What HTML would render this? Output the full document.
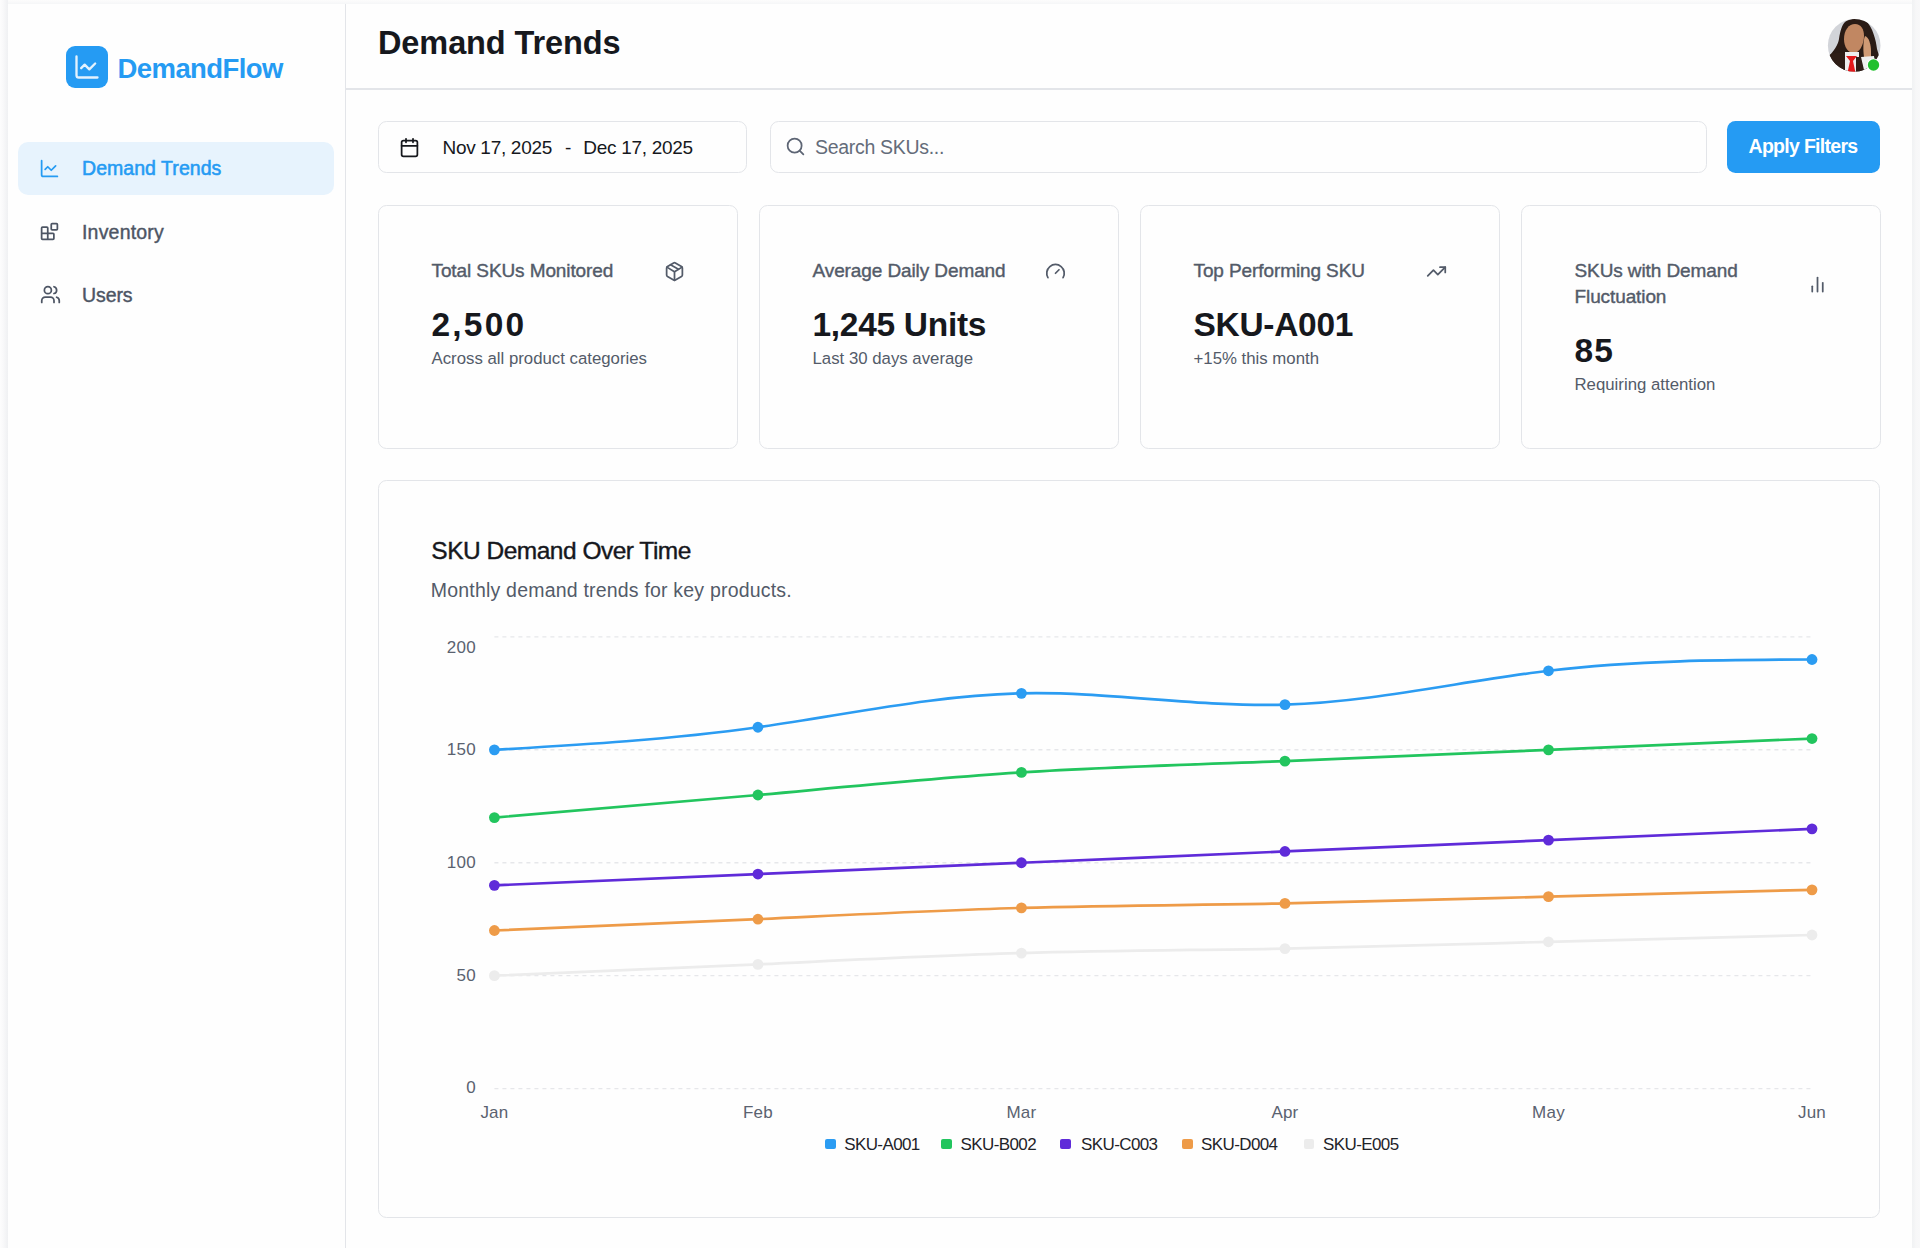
<!DOCTYPE html>
<html><head><meta charset="utf-8"><title>DemandFlow - Demand Trends</title>
<style>
html,body{margin:0;padding:0;}
body{width:1920px;height:1248px;overflow:hidden;background:#fcfcfd;font-family:"Liberation Sans", sans-serif;position:relative;}
.frame{position:absolute;left:8px;top:4px;width:1904px;height:1260px;background:#fefefe;}
.fl{position:absolute;left:0;top:0;width:8px;height:1248px;background:linear-gradient(to right,#fdfdfd 0,#f9f9fa 3px,#f1f2f4 7px,#f0f1f3 8px);}
.fr{position:absolute;left:1912px;top:0;width:8px;height:1248px;background:linear-gradient(to right,#f1f2f4 0,#f3f4f5 2px,#f7f7f8 4px,#f8f8f9 8px);}
.ft{position:absolute;left:0;top:0;width:1920px;height:4px;background:linear-gradient(to bottom,#fcfcfc 0,#f9f9fa 2px,#f5f6f7 4px);}
.side{position:absolute;left:344.5px;top:4px;width:1.5px;height:1244px;background:#e3e5e9;}
.hdr{position:absolute;left:346px;top:88px;width:1566px;height:1.6px;background:#e3e5e9;}
.t{position:absolute;white-space:nowrap;line-height:1;}
.box{position:absolute;}
.card{border:1.6px solid #e3e5e9;border-radius:8.5px;box-sizing:border-box;background:#fefefe;}
.ic{position:absolute;overflow:visible;}
</style></head><body>
<div class="ft"></div><div class="fl"></div><div class="fr"></div><div class="frame"></div>
<div class="side"></div>
<div class="hdr"></div>
<div class="box" style="left:66px;top:46px;width:42px;height:42px;background:#259bf3;border-radius:9px"></div>
<svg class="ic" style="left:73px;top:53px;" width="28" height="28" viewBox="0 0 24 24" fill="none" stroke="#e3f2fe" stroke-width="2" stroke-linecap="round" stroke-linejoin="round"><path d="M3 3v16a2 2 0 0 0 2 2h16"/><path d="m19 9-5 5-4-4-3 3"/></svg>
<div class="t" style="left:117.60px;top:54.92px;font-size:27.5px;font-weight:700;color:#259bf3;letter-spacing:-0.6px;">DemandFlow</div>
<div class="box" style="left:18px;top:142px;width:316px;height:53px;background:#e7f3fd;border-radius:10px"></div>
<svg class="ic" style="left:39.2px;top:157.5px;" width="21" height="21" viewBox="0 0 24 24" fill="none" stroke="#259bf3" stroke-width="2" stroke-linecap="round" stroke-linejoin="round"><path d="M3 3v16a2 2 0 0 0 2 2h16"/><path d="m19 9-5 5-4-4-3 3"/></svg>
<div class="t" style="left:82.00px;top:159.49px;font-size:19.5px;font-weight:400;color:#259bf3;letter-spacing:0.05px;-webkit-text-stroke:0.55px #259bf3;">Demand Trends</div>
<svg class="ic" style="left:39.2px;top:220.7px;" width="21" height="21" viewBox="0 0 24 24" fill="none" stroke="#4d5564" stroke-width="2" stroke-linecap="round" stroke-linejoin="round"><rect width="7" height="7" x="14" y="3" rx="1"/><path d="M10 21V8a1 1 0 0 0-1-1H4a1 1 0 0 0-1 1v12a1 1 0 0 0 1 1h12a1 1 0 0 0 1-1v-5a1 1 0 0 0-1-1H3"/></svg>
<div class="t" style="left:82.00px;top:222.69px;font-size:19.5px;font-weight:400;color:#4d5564;letter-spacing:0.2px;-webkit-text-stroke:0.4px #4d5564;">Inventory</div>
<svg class="ic" style="left:39.5px;top:284.3px;" width="21" height="21" viewBox="0 0 24 24" fill="none" stroke="#4d5564" stroke-width="2" stroke-linecap="round" stroke-linejoin="round"><path d="M16 21v-2a4 4 0 0 0-4-4H6a4 4 0 0 0-4 4v2"/><circle cx="9" cy="7" r="4"/><path d="M22 21v-2a4 4 0 0 0-3-3.87"/><path d="M16 3.13a4 4 0 0 1 0 7.75"/></svg>
<div class="t" style="left:82.00px;top:286.19px;font-size:19.5px;font-weight:400;color:#4d5564;letter-spacing:-0.1px;-webkit-text-stroke:0.4px #4d5564;">Users</div>
<div class="t" style="left:378.00px;top:26.99px;font-size:32.5px;font-weight:700;color:#16181d;letter-spacing:-0.1px;">Demand Trends</div>
<div class="box" style="left:378px;top:121px;width:369px;height:52px;border:1.6px solid #e3e5e9;border-radius:8.5px;box-sizing:border-box"></div>
<svg class="ic" style="left:399px;top:137px;" width="21" height="21" viewBox="0 0 24 24" fill="none" stroke="#16181d" stroke-width="2" stroke-linecap="round" stroke-linejoin="round"><path d="M8 2v4"/><path d="M16 2v4"/><rect width="18" height="18" x="3" y="4" rx="2"/><path d="M3 10h18"/></svg>
<div class="t" style="left:442.50px;top:137.62px;font-size:19px;font-weight:400;color:#16181d;letter-spacing:-0.3px;">Nov 17, 2025</div>
<div class="t" style="left:565.00px;top:137.62px;font-size:19px;font-weight:400;color:#16181d;letter-spacing:0px;">-</div>
<div class="t" style="left:583.30px;top:137.62px;font-size:19px;font-weight:400;color:#16181d;letter-spacing:-0.3px;">Dec 17, 2025</div>
<div class="box" style="left:770px;top:121px;width:937px;height:52px;border:1.6px solid #e3e5e9;border-radius:8.5px;box-sizing:border-box"></div>
<svg class="ic" style="left:784.75px;top:136.25px;" width="21" height="21" viewBox="0 0 24 24" fill="none" stroke="#5d6574" stroke-width="2" stroke-linecap="round" stroke-linejoin="round"><circle cx="11" cy="11" r="8"/><path d="m21 21-4.3-4.3"/></svg>
<div class="t" style="left:815.00px;top:137.69px;font-size:19.5px;font-weight:400;color:#646c7a;letter-spacing:-0.3px;">Search SKUs...</div>
<div class="box" style="left:1727px;top:121px;width:153px;height:52px;background:#259bf3;border-radius:8.5px"></div>
<div class="t" style="left:1748.50px;top:137.49px;font-size:19.5px;font-weight:700;color:#ffffff;letter-spacing:-0.7px;">Apply Filters</div>
<div class="box card" style="left:378px;top:205px;width:359.5px;height:243.5px"></div>
<div class="t" style="left:431.50px;top:260.62px;font-size:19px;font-weight:400;color:#535b69;letter-spacing:-0.1px;-webkit-text-stroke:0.4px #535b69;">Total SKUs Monitored</div>
<div class="t" style="left:431.50px;top:307.84px;font-size:33.5px;font-weight:700;color:#16181d;letter-spacing:2.2px;">2,500</div>
<div class="t" style="left:431.50px;top:350.78px;font-size:16.8px;font-weight:400;color:#535b69;letter-spacing:0px;">Across all product categories</div>
<svg class="ic" style="left:664px;top:261px;" width="21" height="21" viewBox="0 0 24 24" fill="none" stroke="#535b69" stroke-width="2" stroke-linecap="round" stroke-linejoin="round"><path d="M11 21.73a2 2 0 0 0 2 0l7-4A2 2 0 0 0 21 16V8a2 2 0 0 0-1-1.73l-7-4a2 2 0 0 0-2 0l-7 4A2 2 0 0 0 3 8v8a2 2 0 0 0 1 1.73z"/><path d="M12 22V12"/><path d="m3.3 7 7.703 4.734a2 2 0 0 0 1.994 0L20.7 7"/><path d="m7.5 4.27 9 5.15"/></svg>
<div class="box card" style="left:759px;top:205px;width:359.5px;height:243.5px"></div>
<div class="t" style="left:812.50px;top:260.62px;font-size:19px;font-weight:400;color:#535b69;letter-spacing:-0.1px;-webkit-text-stroke:0.4px #535b69;">Average Daily Demand</div>
<div class="t" style="left:812.50px;top:307.84px;font-size:33.5px;font-weight:700;color:#16181d;letter-spacing:-0.3px;">1,245 Units</div>
<div class="t" style="left:812.50px;top:350.78px;font-size:16.8px;font-weight:400;color:#535b69;letter-spacing:0px;">Last 30 days average</div>
<svg class="ic" style="left:1045px;top:261px;" width="21" height="21" viewBox="0 0 24 24" fill="none" stroke="#535b69" stroke-width="2" stroke-linecap="round" stroke-linejoin="round"><path d="m12 14 4-4"/><path d="M3.34 19a10 10 0 1 1 17.32 0"/></svg>
<div class="box card" style="left:1140px;top:205px;width:359.5px;height:243.5px"></div>
<div class="t" style="left:1193.50px;top:260.62px;font-size:19px;font-weight:400;color:#535b69;letter-spacing:-0.1px;-webkit-text-stroke:0.4px #535b69;">Top Performing SKU</div>
<div class="t" style="left:1193.50px;top:307.84px;font-size:33.5px;font-weight:700;color:#16181d;letter-spacing:-0.3px;">SKU-A001</div>
<div class="t" style="left:1193.50px;top:350.78px;font-size:16.8px;font-weight:400;color:#535b69;letter-spacing:0px;">+15% this month</div>
<svg class="ic" style="left:1426px;top:261px;" width="21" height="21" viewBox="0 0 24 24" fill="none" stroke="#535b69" stroke-width="2" stroke-linecap="round" stroke-linejoin="round"><polyline points="22 7 13.5 15.5 8.5 10.5 2 17"/><polyline points="16 7 22 7 22 13"/></svg>
<div class="box card" style="left:1521px;top:205px;width:359.5px;height:243.5px"></div>
<div class="t" style="left:1574.50px;top:260.62px;font-size:19px;font-weight:400;color:#535b69;letter-spacing:-0.1px;-webkit-text-stroke:0.4px #535b69;">SKUs with Demand</div>
<div class="t" style="left:1574.50px;top:286.72px;font-size:19px;font-weight:400;color:#535b69;letter-spacing:-0.1px;-webkit-text-stroke:0.4px #535b69;">Fluctuation</div>
<div class="t" style="left:1574.50px;top:333.94px;font-size:33.5px;font-weight:700;color:#16181d;letter-spacing:1.0px;">85</div>
<div class="t" style="left:1574.50px;top:376.78px;font-size:16.8px;font-weight:400;color:#535b69;letter-spacing:0px;">Requiring attention</div>
<svg class="ic" style="left:1807px;top:274.3px;" width="21" height="21" viewBox="0 0 24 24" fill="none" stroke="#535b69" stroke-width="2" stroke-linecap="round" stroke-linejoin="round"><line x1="18" x2="18" y1="20" y2="10"/><line x1="12" x2="12" y1="20" y2="4"/><line x1="6" x2="6" y1="20" y2="14"/></svg>
<div class="box card" style="left:378px;top:480px;width:1502px;height:737.8px"></div>
<div class="t" style="left:431.30px;top:538.96px;font-size:24.5px;font-weight:400;color:#16181d;letter-spacing:-0.5px;-webkit-text-stroke:0.4px #16181d;">SKU Demand Over Time</div>
<div class="t" style="left:430.80px;top:581.19px;font-size:19.5px;font-weight:400;color:#535b69;letter-spacing:0.2px;">Monthly demand trends for key products.</div>
<svg class="ic" style="left:0;top:0" width="1920" height="1248"><line x1="494.4" x2="1812" y1="636.90" y2="636.90" stroke="#e6e7ea" stroke-width="1.4" stroke-dasharray="4 4"/><line x1="494.4" x2="1812" y1="749.82" y2="749.82" stroke="#e6e7ea" stroke-width="1.4" stroke-dasharray="4 4"/><line x1="494.4" x2="1812" y1="862.75" y2="862.75" stroke="#e6e7ea" stroke-width="1.4" stroke-dasharray="4 4"/><line x1="494.4" x2="1812" y1="975.67" y2="975.67" stroke="#e6e7ea" stroke-width="1.4" stroke-dasharray="4 4"/><line x1="494.4" x2="1812" y1="1088.60" y2="1088.60" stroke="#e6e7ea" stroke-width="1.4" stroke-dasharray="4 4"/><path d="M494.40,749.82C582.24,744.71 670.08,739.60 757.92,727.24C845.76,714.88 933.60,695.29 1021.44,693.36C1109.28,691.44 1197.12,707.18 1284.96,704.65C1372.80,702.13 1460.64,681.35 1548.48,670.78C1636.32,660.21 1724.16,659.85 1812.00,659.48" fill="none" stroke="#2b9cf2" stroke-width="2.7"/><circle cx="494.40" cy="749.82" r="5.4" fill="#2b9cf2"/><circle cx="757.92" cy="727.24" r="5.4" fill="#2b9cf2"/><circle cx="1021.44" cy="693.36" r="5.4" fill="#2b9cf2"/><circle cx="1284.96" cy="704.65" r="5.4" fill="#2b9cf2"/><circle cx="1548.48" cy="670.78" r="5.4" fill="#2b9cf2"/><circle cx="1812.00" cy="659.48" r="5.4" fill="#2b9cf2"/><path d="M494.40,817.58C582.24,810.32 670.08,803.06 757.92,794.99C845.76,786.93 933.60,778.05 1021.44,772.41C1109.28,766.77 1197.12,764.38 1284.96,761.12C1372.80,757.86 1460.64,753.73 1548.48,749.82C1636.32,745.92 1724.16,742.22 1812.00,738.53" fill="none" stroke="#22c55e" stroke-width="2.7"/><circle cx="494.40" cy="817.58" r="5.4" fill="#22c55e"/><circle cx="757.92" cy="794.99" r="5.4" fill="#22c55e"/><circle cx="1021.44" cy="772.41" r="5.4" fill="#22c55e"/><circle cx="1284.96" cy="761.12" r="5.4" fill="#22c55e"/><circle cx="1548.48" cy="749.82" r="5.4" fill="#22c55e"/><circle cx="1812.00" cy="738.53" r="5.4" fill="#22c55e"/><path d="M494.40,885.33C582.24,881.57 670.08,877.81 757.92,874.04C845.76,870.28 933.60,866.51 1021.44,862.75C1109.28,858.99 1197.12,855.22 1284.96,851.46C1372.80,847.69 1460.64,843.93 1548.48,840.16C1636.32,836.40 1724.16,832.64 1812.00,828.87" fill="none" stroke="#5f2bd9" stroke-width="2.7"/><circle cx="494.40" cy="885.33" r="5.4" fill="#5f2bd9"/><circle cx="757.92" cy="874.04" r="5.4" fill="#5f2bd9"/><circle cx="1021.44" cy="862.75" r="5.4" fill="#5f2bd9"/><circle cx="1284.96" cy="851.46" r="5.4" fill="#5f2bd9"/><circle cx="1548.48" cy="840.16" r="5.4" fill="#5f2bd9"/><circle cx="1812.00" cy="828.87" r="5.4" fill="#5f2bd9"/><path d="M494.40,930.50C582.24,926.92 670.08,923.33 757.92,919.21C845.76,915.10 933.60,910.45 1021.44,907.92C1109.28,905.39 1197.12,904.98 1284.96,903.40C1372.80,901.83 1460.64,899.08 1548.48,896.63C1636.32,894.17 1724.16,892.01 1812.00,889.85" fill="none" stroke="#ee9b48" stroke-width="2.7"/><circle cx="494.40" cy="930.50" r="5.4" fill="#ee9b48"/><circle cx="757.92" cy="919.21" r="5.4" fill="#ee9b48"/><circle cx="1021.44" cy="907.92" r="5.4" fill="#ee9b48"/><circle cx="1284.96" cy="903.40" r="5.4" fill="#ee9b48"/><circle cx="1548.48" cy="896.63" r="5.4" fill="#ee9b48"/><circle cx="1812.00" cy="889.85" r="5.4" fill="#ee9b48"/><path d="M494.40,975.67C582.24,972.09 670.08,968.50 757.92,964.38C845.76,960.27 933.60,955.62 1021.44,953.09C1109.28,950.56 1197.12,950.15 1284.96,948.57C1372.80,947.00 1460.64,944.25 1548.48,941.80C1636.32,939.34 1724.16,937.18 1812.00,935.02" fill="none" stroke="#ececec" stroke-width="2.7"/><circle cx="494.40" cy="975.67" r="5.4" fill="#ececec"/><circle cx="757.92" cy="964.38" r="5.4" fill="#ececec"/><circle cx="1021.44" cy="953.09" r="5.4" fill="#ececec"/><circle cx="1284.96" cy="948.57" r="5.4" fill="#ececec"/><circle cx="1548.48" cy="941.80" r="5.4" fill="#ececec"/><circle cx="1812.00" cy="935.02" r="5.4" fill="#ececec"/></svg>
<div class="t" style="left:376px;width:100px;text-align:right;top:639.36px;font-size:17px;color:#5a6270;letter-spacing:0.3px">200</div>
<div class="t" style="left:376px;width:100px;text-align:right;top:741.33px;font-size:17px;color:#5a6270;letter-spacing:0.3px">150</div>
<div class="t" style="left:376px;width:100px;text-align:right;top:854.26px;font-size:17px;color:#5a6270;letter-spacing:0.3px">100</div>
<div class="t" style="left:376px;width:100px;text-align:right;top:967.18px;font-size:17px;color:#5a6270;letter-spacing:0.3px">50</div>
<div class="t" style="left:376px;width:100px;text-align:right;top:1079.36px;font-size:17px;color:#5a6270;letter-spacing:0.3px">0</div>
<div class="t" style="left:434.40px;width:120px;text-align:center;top:1103.61px;font-size:17px;color:#5a6270;letter-spacing:0.2px">Jan</div>
<div class="t" style="left:697.92px;width:120px;text-align:center;top:1103.61px;font-size:17px;color:#5a6270;letter-spacing:0.2px">Feb</div>
<div class="t" style="left:961.44px;width:120px;text-align:center;top:1103.61px;font-size:17px;color:#5a6270;letter-spacing:0.2px">Mar</div>
<div class="t" style="left:1224.96px;width:120px;text-align:center;top:1103.61px;font-size:17px;color:#5a6270;letter-spacing:0.2px">Apr</div>
<div class="t" style="left:1488.48px;width:120px;text-align:center;top:1103.61px;font-size:17px;color:#5a6270;letter-spacing:0.2px">May</div>
<div class="t" style="left:1752.00px;width:120px;text-align:center;top:1103.61px;font-size:17px;color:#5a6270;letter-spacing:0.2px">Jun</div>
<div class="box" style="left:825.2px;top:1138.8px;width:10.5px;height:10.5px;background:#2b9cf2;border-radius:2px"></div>
<div class="t" style="left:844.20px;top:1135.61px;font-size:17px;font-weight:400;color:#1f2329;letter-spacing:-0.6px;">SKU-A001</div>
<div class="box" style="left:941.4px;top:1138.8px;width:10.5px;height:10.5px;background:#22c55e;border-radius:2px"></div>
<div class="t" style="left:960.50px;top:1135.61px;font-size:17px;font-weight:400;color:#1f2329;letter-spacing:-0.6px;">SKU-B002</div>
<div class="box" style="left:1060px;top:1138.8px;width:10.5px;height:10.5px;background:#5f2bd9;border-radius:2px"></div>
<div class="t" style="left:1081.00px;top:1135.61px;font-size:17px;font-weight:400;color:#1f2329;letter-spacing:-0.6px;">SKU-C003</div>
<div class="box" style="left:1182px;top:1138.8px;width:10.5px;height:10.5px;background:#ee9b48;border-radius:2px"></div>
<div class="t" style="left:1201.00px;top:1135.61px;font-size:17px;font-weight:400;color:#1f2329;letter-spacing:-0.6px;">SKU-D004</div>
<div class="box" style="left:1303.7px;top:1138.8px;width:10.5px;height:10.5px;background:#ececec;border-radius:2px"></div>
<div class="t" style="left:1323.00px;top:1135.61px;font-size:17px;font-weight:400;color:#1f2329;letter-spacing:-0.6px;">SKU-E005</div>
<svg class="ic" style="left:1826px;top:17px" width="58" height="58" viewBox="0 0 58 58">
<defs><clipPath id="av"><circle cx="28.2" cy="28.4" r="26.3"/></clipPath></defs>
<g clip-path="url(#av)">
<rect width="58" height="58" fill="#d2d4d9"/>
<path d="M19 5 C24 1 36 0 41 5 C46 10 50 22 51 32 L54 42 L54 58 L0 58 L2 40 C8 34 12 28 13 22 C14 14 16 8 19 5Z" fill="#2a1b15"/>
<path d="M29 7 C35 7 38 12 38 19 C38 28 33 36 28 36 C22 36 18 30 18 22 C18 13 23 7 29 7Z" fill="#c18762"/>
<path d="M39 19 C43 20 45 28 45 34 L45 40 L38 40 C37 33 37 24 39 19Z" fill="#d09a74"/>
<path d="M0 40 C5 36 12 35 19 36 L19 58 L0 58Z" fill="#2e1d16"/>
<path d="M19 35 L33 35 L33 58 L19 58Z" fill="#eeeeee"/>
<path d="M20 39 L31 39 L27 44 L30 58 L21 58 L24 44Z" fill="#e3191b"/>
<path d="M30 40 L38 40 L38 58 L30 58Z" fill="#2e1d16"/>
<path d="M35 40 L48 39 L50 52 L38 53Z" fill="#efefef"/>
</g>
<circle cx="47.5" cy="48" r="6.6" fill="#ffffff"/>
<circle cx="47.5" cy="48" r="5.7" fill="#21c02e"/>
</svg>
</body></html>
